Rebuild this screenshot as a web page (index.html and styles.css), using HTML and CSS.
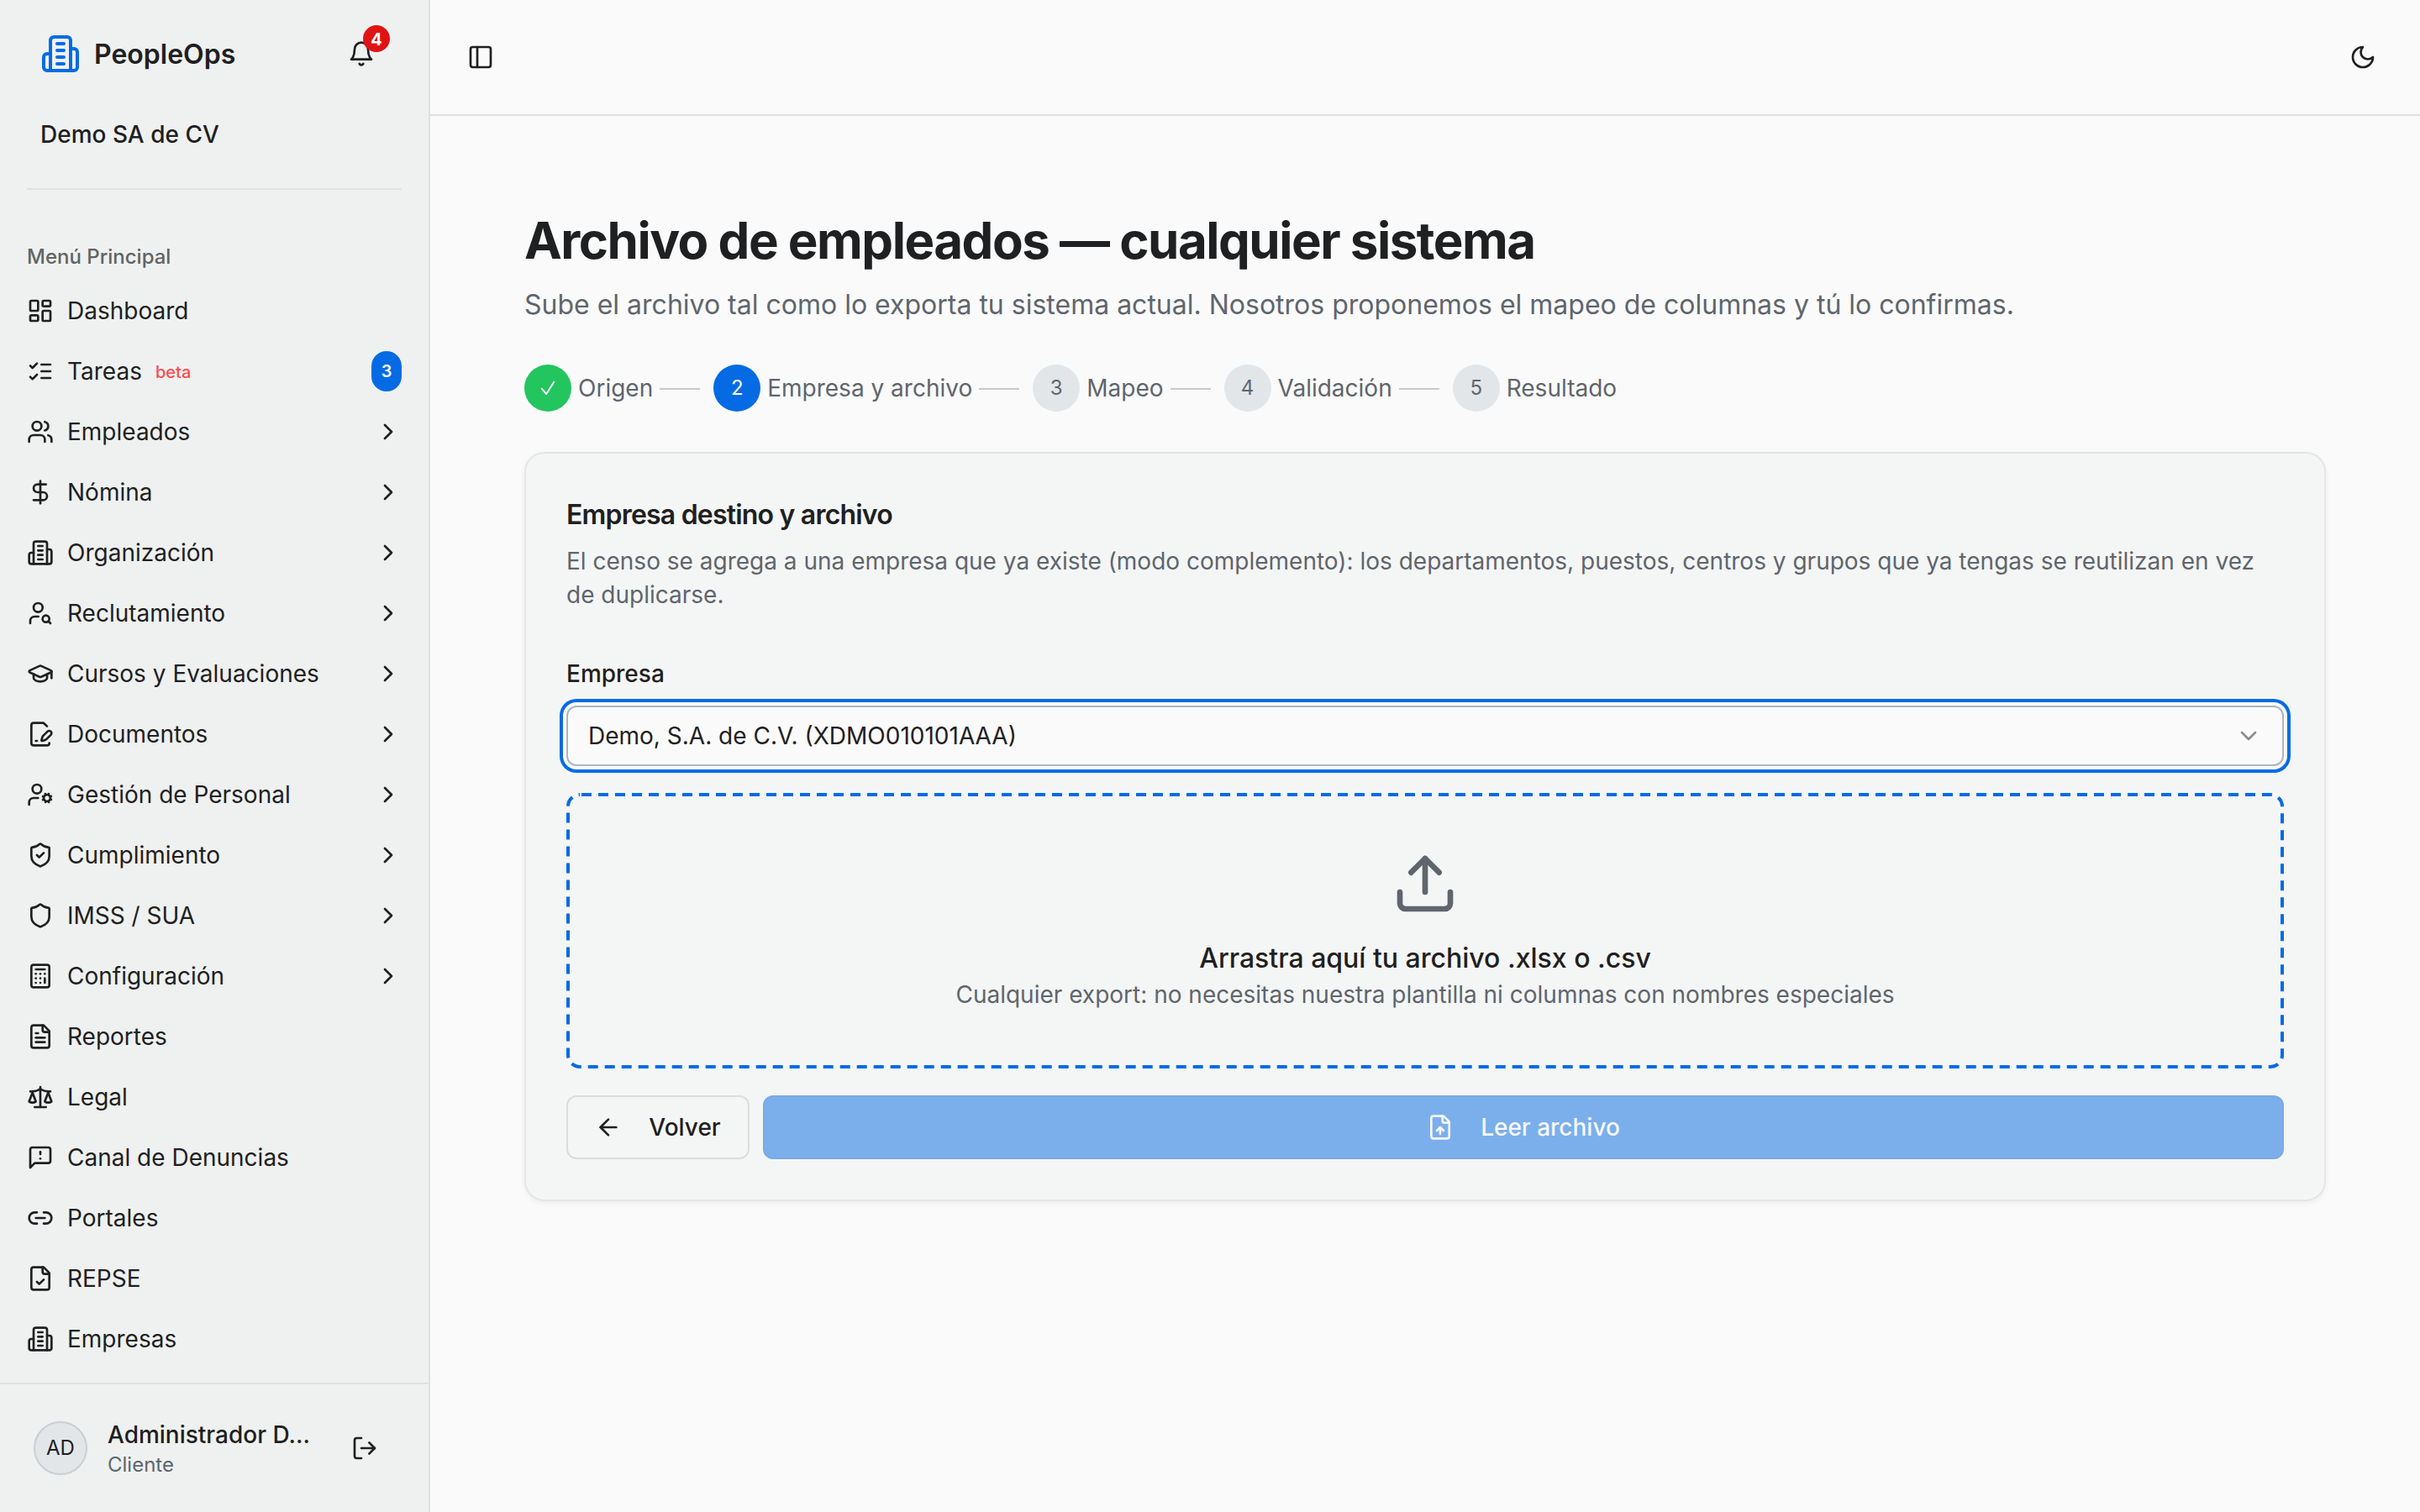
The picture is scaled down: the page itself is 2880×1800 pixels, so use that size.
FILE: index.html
```html
<!DOCTYPE html>
<html lang="es">
<head>
    <meta charset="UTF-8">
    <meta name="viewport" content="width=device-width, initial-scale=1.0">
    <title>PeopleOps - Archivo de empleados</title>
    <link rel="stylesheet" href="styles.css">
</head>
<body>
    <!-- Icon sprite -->
    <svg class="sprite" xmlns="http://www.w3.org/2000/svg">
        <symbol id="i-building" viewBox="0 0 24 24"><path d="M6 22V4a2 2 0 0 1 2-2h8a2 2 0 0 1 2 2v18Z"/><path d="M6 12H4a2 2 0 0 0-2 2v6a2 2 0 0 0 2 2h2"/><path d="M18 9h2a2 2 0 0 1 2 2v9a2 2 0 0 1-2 2h-2"/><path d="M10 6h4"/><path d="M10 10h4"/><path d="M10 14h4"/><path d="M10 18h4"/></symbol>
        <symbol id="i-bell" viewBox="0 0 24 24"><path d="M6 8a6 6 0 0 1 12 0c0 7 3 9 3 9H3s3-2 3-9"/><path d="M10.3 21a1.94 1.94 0 0 0 3.4 0"/></symbol>
        <symbol id="i-dashboard" viewBox="0 0 24 24"><rect width="7" height="9" x="3" y="3" rx="1"/><rect width="7" height="5" x="14" y="3" rx="1"/><rect width="7" height="9" x="14" y="12" rx="1"/><rect width="7" height="5" x="3" y="16" rx="1"/></symbol>
        <symbol id="i-tasks" viewBox="0 0 24 24"><path d="m3 17 2 2 4-4"/><path d="m3 7 2 2 4-4"/><path d="M13 6h8"/><path d="M13 12h8"/><path d="M13 18h8"/></symbol>
        <symbol id="i-users" viewBox="0 0 24 24"><path d="M16 21v-2a4 4 0 0 0-4-4H6a4 4 0 0 0-4 4v2"/><circle cx="9" cy="7" r="4"/><path d="M22 21v-2a4 4 0 0 0-3-3.87"/><path d="M16 3.13a4 4 0 0 1 0 7.75"/></symbol>
        <symbol id="i-dollar" viewBox="0 0 24 24"><path d="M12 2v20"/><path d="M17 5H9.5a3.5 3.5 0 0 0 0 7h5a3.5 3.5 0 0 1 0 7H6"/></symbol>
        <symbol id="i-user-search" viewBox="0 0 24 24"><circle cx="10" cy="7" r="4"/><path d="M10.3 15H7a4 4 0 0 0-4 4v2"/><circle cx="17" cy="17" r="3"/><path d="m21 21-1.9-1.9"/></symbol>
        <symbol id="i-cap" viewBox="0 0 24 24"><path d="M21.42 10.922a1 1 0 0 0-.019-1.838L12.83 5.18a2 2 0 0 0-1.66 0L2.6 9.08a1 1 0 0 0 0 1.832l8.57 3.908a2 2 0 0 0 1.66 0z"/><path d="M22 10v6"/><path d="M6 12.5V16a6 3 0 0 0 12 0v-3.5"/></symbol>
        <symbol id="i-file-pen" viewBox="0 0 24 24"><path d="m18 5-2.414-2.414A2 2 0 0 0 14.172 2H6a2 2 0 0 0-2 2v16a2 2 0 0 0 2 2h12a2 2 0 0 0 2-2"/><path d="M21.378 12.626a1 1 0 0 0-3.004-3.004l-4.01 4.012a2 2 0 0 0-.506.854l-.837 2.87a.5.5 0 0 0 .62.62l2.87-.837a2 2 0 0 0 .854-.506z"/><path d="M8 18h1"/></symbol>
        <symbol id="i-user-cog" viewBox="0 0 24 24"><circle cx="18" cy="15" r="3"/><circle cx="9" cy="7" r="4"/><path d="M10 15H6a4 4 0 0 0-4 4v2"/><path d="m21.7 16.4-.9-.3"/><path d="m15.2 13.9-.9-.3"/><path d="m16.6 18.7.3-.9"/><path d="m19.1 12.2.3-.9"/><path d="m19.6 18.7-.4-1"/><path d="m16.8 12.3-.4-1"/><path d="m14.3 16.6 1-.4"/><path d="m20.7 13.8 1-.4"/></symbol>
        <symbol id="i-shield" viewBox="0 0 24 24"><path d="M20 13c0 5-3.5 7.5-7.66 8.95a1 1 0 0 1-.67-.01C7.5 20.5 4 18 4 13V6a1 1 0 0 1 1-1c2 0 4.5-1.2 6.24-2.72a1.17 1.17 0 0 1 1.52 0C14.51 3.81 17 5 19 5a1 1 0 0 1 1 1z"/></symbol>
        <symbol id="i-shield-check" viewBox="0 0 24 24"><path d="M20 13c0 5-3.5 7.5-7.66 8.95a1 1 0 0 1-.67-.01C7.5 20.5 4 18 4 13V6a1 1 0 0 1 1-1c2 0 4.5-1.2 6.24-2.72a1.17 1.17 0 0 1 1.52 0C14.51 3.81 17 5 19 5a1 1 0 0 1 1 1z"/><path d="m9 12 2 2 4-4"/></symbol>
        <symbol id="i-calculator" viewBox="0 0 24 24"><rect width="16" height="20" x="4" y="2" rx="2"/><path d="M8 6h8"/><path d="M16 14v4"/><path d="M16 10h.01"/><path d="M12 10h.01"/><path d="M8 10h.01"/><path d="M12 14h.01"/><path d="M8 14h.01"/><path d="M12 18h.01"/><path d="M8 18h.01"/></symbol>
        <symbol id="i-file-text" viewBox="0 0 24 24"><path d="M15 2H6a2 2 0 0 0-2 2v16a2 2 0 0 0 2 2h12a2 2 0 0 0 2-2V7Z"/><path d="M14 2v4a2 2 0 0 0 2 2h4"/><path d="M10 9H8"/><path d="M16 13H8"/><path d="M16 17H8"/></symbol>
        <symbol id="i-scale" viewBox="0 0 24 24"><path d="m16 16 3-8 3 8c-.87.65-1.92 1-3 1s-2.13-.35-3-1Z"/><path d="m2 16 3-8 3 8c-.87.65-1.92 1-3 1s-2.13-.35-3-1Z"/><path d="M7 21h10"/><path d="M12 3v18"/><path d="M3 7h2c2 0 5-1 7-2 2 1 5 2 7 2h2"/></symbol>
        <symbol id="i-message" viewBox="0 0 24 24"><path d="M21 15a2 2 0 0 1-2 2H7l-4 4V5a2 2 0 0 1 2-2h14a2 2 0 0 1 2 2z"/><path d="M12 7v2"/><path d="M12 13h.01"/></symbol>
        <symbol id="i-link" viewBox="0 0 24 24"><path d="M9 17H7A5 5 0 0 1 7 7h2"/><path d="M15 7h2a5 5 0 1 1 0 10h-2"/><path d="M8 12h8"/></symbol>
        <symbol id="i-file-check" viewBox="0 0 24 24"><path d="M15 2H6a2 2 0 0 0-2 2v16a2 2 0 0 0 2 2h12a2 2 0 0 0 2-2V7Z"/><path d="M14 2v4a2 2 0 0 0 2 2h4"/><path d="m9 15 2 2 4-4"/></symbol>
        <symbol id="i-file-up" viewBox="0 0 24 24"><path d="M15 2H6a2 2 0 0 0-2 2v16a2 2 0 0 0 2 2h12a2 2 0 0 0 2-2V7Z"/><path d="M14 2v4a2 2 0 0 0 2 2h4"/><path d="M12 12v6"/><path d="m15 15-3-3-3 3"/></symbol>
        <symbol id="i-logout" viewBox="0 0 24 24"><path d="M9 21H5a2 2 0 0 1-2-2V5a2 2 0 0 1 2-2h4"/><path d="m16 17 5-5-5-5"/><path d="M21 12H9"/></symbol>
        <symbol id="i-panel" viewBox="0 0 24 24"><rect width="18" height="18" x="3" y="3" rx="2"/><path d="M9 3v18"/></symbol>
        <symbol id="i-moon" viewBox="0 0 24 24"><path d="M12 3a6 6 0 0 0 9 9 9 9 0 1 1-9-9Z"/></symbol>
        <symbol id="i-upload" viewBox="0 0 24 24"><path d="M21 15v4a2 2 0 0 1-2 2H5a2 2 0 0 1-2-2v-4"/><path d="m17 8-5-5-5 5"/><path d="M12 3v12"/></symbol>
        <symbol id="i-arrow-left" viewBox="0 0 24 24"><path d="m12 19-7-7 7-7"/><path d="M19 12H5"/></symbol>
        <symbol id="i-right" viewBox="0 0 24 24"><path d="m9 18 6-6-6-6"/></symbol>
        <symbol id="i-down" viewBox="0 0 24 24"><path d="m6 9 6 6 6-6"/></symbol>
        <symbol id="i-done" viewBox="0 0 56 56"><path d="m20.8 28.8 5.4 6.2 9-14.2"/></symbol>
    </svg>

    <!-- Sidebar -->
    <aside class="sidebar">
        <div class="brand">
            <svg class="brand-logo"><use href="#i-building"/></svg>
            <span class="brand-name">PeopleOps</span>
            <button class="bell">
                <svg class="icon"><use href="#i-bell"/></svg>
                <span class="bell-count">4</span>
            </button>
        </div>
        <div class="company">Demo SA de CV</div>
        <div class="divider"></div>

        <nav class="menu">
            <div class="menu-label">Menú Principal</div>
            <a class="menu-item"><svg class="icon"><use href="#i-dashboard"/></svg>Dashboard</a>
            <a class="menu-item"><svg class="icon"><use href="#i-tasks"/></svg>Tareas<span class="beta">beta</span><span class="count">3</span></a>
            <a class="menu-item"><svg class="icon"><use href="#i-users"/></svg>Empleados<svg class="icon chevron"><use href="#i-right"/></svg></a>
            <a class="menu-item"><svg class="icon"><use href="#i-dollar"/></svg>Nómina<svg class="icon chevron"><use href="#i-right"/></svg></a>
            <a class="menu-item"><svg class="icon"><use href="#i-building"/></svg>Organización<svg class="icon chevron"><use href="#i-right"/></svg></a>
            <a class="menu-item"><svg class="icon"><use href="#i-user-search"/></svg>Reclutamiento<svg class="icon chevron"><use href="#i-right"/></svg></a>
            <a class="menu-item"><svg class="icon"><use href="#i-cap"/></svg>Cursos y Evaluaciones<svg class="icon chevron"><use href="#i-right"/></svg></a>
            <a class="menu-item"><svg class="icon"><use href="#i-file-pen"/></svg>Documentos<svg class="icon chevron"><use href="#i-right"/></svg></a>
            <a class="menu-item"><svg class="icon"><use href="#i-user-cog"/></svg>Gestión de Personal<svg class="icon chevron"><use href="#i-right"/></svg></a>
            <a class="menu-item"><svg class="icon"><use href="#i-shield-check"/></svg>Cumplimiento<svg class="icon chevron"><use href="#i-right"/></svg></a>
            <a class="menu-item"><svg class="icon"><use href="#i-shield"/></svg>IMSS / SUA<svg class="icon chevron"><use href="#i-right"/></svg></a>
            <a class="menu-item"><svg class="icon"><use href="#i-calculator"/></svg>Configuración<svg class="icon chevron"><use href="#i-right"/></svg></a>
            <a class="menu-item"><svg class="icon"><use href="#i-file-text"/></svg>Reportes</a>
            <a class="menu-item"><svg class="icon"><use href="#i-scale"/></svg>Legal</a>
            <a class="menu-item"><svg class="icon"><use href="#i-message"/></svg>Canal de Denuncias</a>
            <a class="menu-item"><svg class="icon"><use href="#i-link"/></svg>Portales</a>
            <a class="menu-item"><svg class="icon"><use href="#i-file-check"/></svg>REPSE</a>
            <a class="menu-item"><svg class="icon"><use href="#i-building"/></svg>Empresas</a>
        </nav>

        <div class="user">
            <div class="avatar">AD</div>
            <div class="user-info">
                <div class="user-name">Administrador D…</div>
                <div class="user-role">Cliente</div>
            </div>
            <svg class="icon"><use href="#i-logout"/></svg>
        </div>
    </aside>

    <!-- Main area -->
    <div class="main">
        <header class="topbar">
            <svg class="icon"><use href="#i-panel"/></svg>
            <svg class="icon"><use href="#i-moon"/></svg>
        </header>

        <main class="content">
            <h1>Archivo de empleados — cualquier sistema</h1>
            <p class="subtitle">Sube el archivo tal como lo exporta tu sistema actual. Nosotros proponemos el mapeo de columnas y tú lo confirmas.</p>

            <div class="steps">
                <div class="step"><span class="dot done"><svg class="done-mark"><use href="#i-done"/></svg></span>Origen<span class="line"></span></div>
                <div class="step"><span class="dot current">2</span>Empresa y archivo<span class="line"></span></div>
                <div class="step"><span class="dot">3</span>Mapeo<span class="line"></span></div>
                <div class="step"><span class="dot">4</span>Validación<span class="line"></span></div>
                <div class="step"><span class="dot">5</span>Resultado</div>
            </div>

            <section class="card">
                <h2>Empresa destino y archivo</h2>
                <p class="card-text">El censo se agrega a una empresa que ya existe (modo complemento): los departamentos, puestos, centros y grupos que ya tengas se reutilizan en vez de duplicarse.</p>

                <div class="field-label">Empresa</div>
                <div class="select">
                    <span>Demo, S.A. de C.V. (XDMO010101AAA)</span>
                    <svg class="icon"><use href="#i-down"/></svg>
                </div>

                <div class="dropzone">
                    <svg class="drop-border"><rect class="drop-dash"/></svg>
                    <svg class="upload-icon"><use href="#i-upload"/></svg>
                    <div class="drop-title">Arrastra aquí tu archivo .xlsx o .csv</div>
                    <div class="drop-text">Cualquier export: no necesitas nuestra plantilla ni columnas con nombres especiales</div>
                </div>

                <div class="actions">
                    <button class="btn back"><svg class="icon"><use href="#i-arrow-left"/></svg>Volver</button>
                    <button class="btn primary" disabled><svg class="icon"><use href="#i-file-up"/></svg>Leer archivo</button>
                </div>
            </section>
        </main>
    </div>
</body>
</html>
```
FILE: styles.css
```css
* {
    box-sizing: border-box;
}

body {
    margin: 0;
    display: flex;
    height: 100vh;
    overflow: hidden;
    font-family: Inter, sans-serif;
    font-size: 28px;
    line-height: 40px;
    color: #1f2021;
    background-color: #fafafa;
}

h1, h2, p {
    margin: 0;
}

button {
    font: inherit;
    color: inherit;
    background: none;
    border: none;
    padding: 0;
}

svg {
    fill: none;
    stroke: currentColor;
    stroke-width: 2;
    stroke-linecap: round;
    stroke-linejoin: round;
    flex-shrink: 0;
}

.sprite {
    display: none;
}

.icon {
    display: block;
    width: 32px;
    height: 32px;
}

/* Sidebar */
.sidebar {
    width: 512px;
    flex-shrink: 0;
    display: flex;
    flex-direction: column;
    background-color: #eef1f0;
    border-right: 2px solid #dfe1e0;
}

.brand {
    display: flex;
    align-items: center;
    height: 64px;
    margin: 32px 48px 0;
}

.brand-logo {
    width: 48px;
    height: 48px;
    color: #046be4;
}

.brand-name {
    margin: 2px 0 0 16px;
    font-size: 32px;
    font-weight: 600;
}

.bell {
    position: relative;
    display: flex;
    align-items: center;
    justify-content: center;
    width: 64px;
    height: 64px;
    margin-left: auto;
}

.bell-count {
    position: absolute;
    top: -2px;
    right: -2px;
    width: 32px;
    height: 32px;
    border-radius: 50%;
    background-color: #e01414;
    color: #fff;
    font-size: 20px;
    font-weight: 700;
    line-height: 34px;
    text-align: center;
}

.company {
    margin: 44px 48px 0;
    font-weight: 500;
}

.divider {
    height: 2px;
    margin: 44px 32px 0;
    background-color: #dfe1e0;
}

.menu {
    flex: 1;
    display: flex;
    flex-direction: column;
    gap: 8px;
    padding: 48px 32px 0;
}

.menu-label {
    height: 64px;
    margin-bottom: -8px;
    font-size: 24px;
    font-weight: 500;
    line-height: 64px;
    color: #616363;
}

.menu-item {
    display: flex;
    align-items: center;
    gap: 16px;
    height: 64px;
}

.chevron {
    margin-left: auto;
}

.beta {
    margin-top: 2px;
    font-size: 20px;
    font-weight: 500;
    color: #fb4b4e;
}

.count {
    width: 36px;
    height: 48px;
    margin-left: auto;
    border-radius: 18px;
    background-color: #046be4;
    color: #fff;
    font-size: 20px;
    font-weight: 600;
    line-height: 49px;
    text-align: center;
}

.user {
    display: flex;
    align-items: center;
    height: 154px;
    padding-left: 40px;
    border-top: 2px solid #dfe1e0;
}

.avatar {
    width: 64px;
    height: 64px;
    border: 2px solid #cbced1;
    border-radius: 50%;
    background-color: #e2e6e9;
    font-size: 24px;
    line-height: 60px;
    text-align: center;
}

.user-info {
    width: 250px;
    margin: 0 40px 0 24px;
}

.user-name {
    font-weight: 500;
    white-space: nowrap;
}

.user-role {
    font-size: 24px;
    line-height: 32px;
    color: #5f656d;
}

/* Main area */
.main {
    flex: 1;
}

.topbar {
    display: flex;
    align-items: center;
    justify-content: space-between;
    height: 138px;
    padding: 0 52px 0 44px;
    border-bottom: 2px solid #dfe1e0;
}

.content {
    padding: 112px;
}

h1 {
    font-size: 60px;
    font-weight: 700;
    line-height: 72px;
    letter-spacing: -0.025em;
}

.subtitle {
    margin-top: 17px;
    font-size: 32px;
    line-height: 48px;
    color: #5f656d;
}

/* Stepper */
.steps {
    display: flex;
    gap: 16px;
    margin: 47px 0 48px;
    color: #5f656d;
}

.step {
    display: flex;
    align-items: center;
    gap: 8px;
}

.dot {
    width: 56px;
    height: 56px;
    border-radius: 50%;
    background-color: #e2e6e9;
    font-size: 24px;
    line-height: 56px;
    text-align: center;
}

.dot.done {
    background-color: #22c55e;
    color: #fff;
}

.done-mark {
    display: block;
    width: 56px;
    height: 56px;
}

.dot.current {
    background-color: #046be4;
    color: #fff;
}

.line {
    width: 48px;
    height: 2px;
    margin-top: 2px;
    background-color: #c8c9ca;
}

/* Card */
.card {
    padding: 48px;
    border: 2px solid #e4e6e6;
    border-radius: 24px;
    background-color: #f4f6f5;
    box-shadow: 0 2px 6px rgba(0, 0, 0, 0.06);
}

h2 {
    margin-top: 1px;
    font-size: 32px;
    font-weight: 600;
    line-height: 48px;
    letter-spacing: -0.025em;
}

.card-text {
    margin-top: 11px;
    color: #5f656d;
}

.field-label {
    margin-top: 60px;
    font-weight: 500;
    line-height: 28px;
}

.select {
    display: flex;
    align-items: center;
    justify-content: space-between;
    height: 72px;
    margin-top: 24px;
    padding: 0 24px;
    border: 2px solid #b0b4bb;
    border-radius: 12px;
    background-color: #fafafa;
    box-shadow: 0 0 0 4px #fafafa, 0 0 0 8px #046be4;
}

.select .icon {
    opacity: 0.5;
}

.dropzone {
    position: relative;
    display: flex;
    flex-direction: column;
    align-items: center;
    margin-top: 32px;
    padding: 68px;
}

/* Long dashes, which a dashed border cannot give at this width */
.drop-border {
    position: absolute;
    inset: 0;
    width: 100%;
    height: 100%;
    color: #046be4;
}

.drop-dash {
    x: 2px;
    y: 2px;
    rx: 14px;
    width: calc(100% - 4px);
    height: calc(100% - 4px);
    stroke-width: 4px;
    stroke-linecap: butt;
    stroke-dasharray: 12 8;
    stroke-dashoffset: -2px;
}

.upload-icon {
    width: 80px;
    height: 80px;
    color: #5f656d;
}

.drop-title {
    margin-top: 25px;
    font-size: 32px;
    font-weight: 500;
    line-height: 47px;
}

.drop-text {
    color: #5f656d;
}

.actions {
    display: flex;
    gap: 16px;
    margin-top: 32px;
}

.btn {
    display: flex;
    align-items: center;
    justify-content: center;
    gap: 32px;
    height: 76px;
    border: 2px solid #dbdddc;
    border-radius: 12px;
    font-weight: 500;
}

.btn.back {
    width: 218px;
}

.btn.primary {
    flex: 1;
    border-color: #0560cb;
    background-color: #046be4;
    color: #fafafa;
    opacity: 0.5;
}
```
